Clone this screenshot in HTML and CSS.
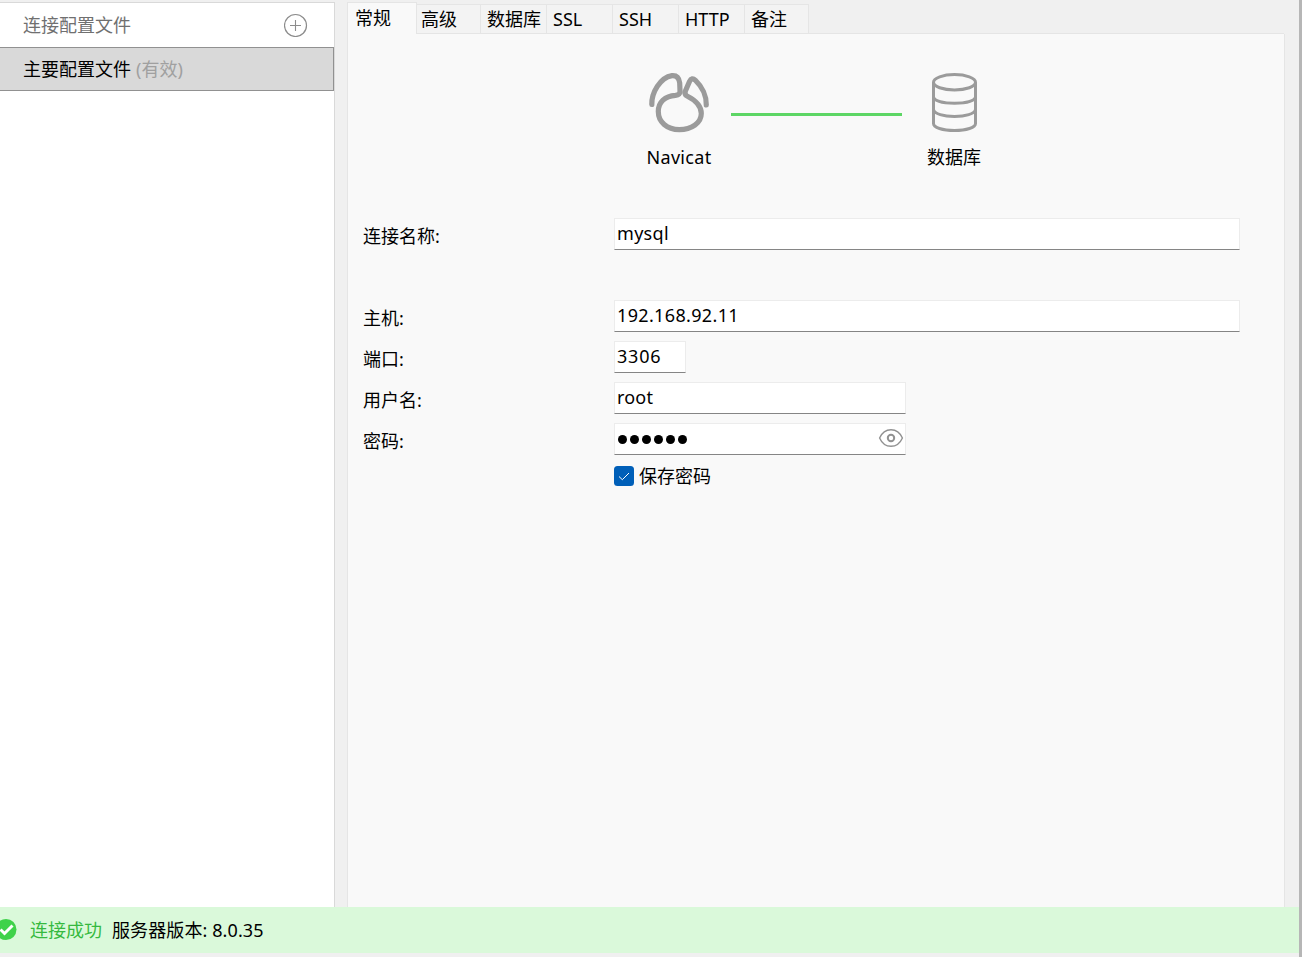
FILE: index.html
```html
<!DOCTYPE html>
<html lang="zh-CN">
<head>
<meta charset="utf-8">
<title>Navicat</title>
<link rel="stylesheet" href="styles.css">
</head>
<body>
<div class="window">
  <div class="main">
    <aside class="sidebar">
      <div class="sidebar-head">
        <span>连接配置文件</span>
        <svg class="add" width="24" height="24" viewBox="0 0 24 24" fill="none" stroke="#8c8c8c"><circle cx="11.500" cy="12.500" r="11" stroke-width="1.200"/><path d="M11.500 7v11M6 12.500h11" stroke-width="1.100"/></svg>
      </div>
      <div class="profile"><span>主要配置文件</span><span class="active-mark">(有效)</span></div>
    </aside>
    <section class="content">
      <nav class="tabs">
        <div class="tab selected">常规</div>
        <div class="tab t-adv">高级</div>
        <div class="tab">数据库</div>
        <div class="tab">SSL</div>
        <div class="tab">SSH</div>
        <div class="tab">HTTP</div>
        <div class="tab t-note">备注</div>
      </nav>
      <div class="panel">
        <div class="diagram">
          <div class="node">
            <svg width="64" height="64" viewBox="0 0 64 64" fill="none" stroke="#9b9b9b" stroke-width="5.200" stroke-linecap="round" stroke-linejoin="round"><path d="M4.800 33.500C4.500 22 13 6.500 25 4.600C30.500 4.200 32.200 7.500 32.700 12L33 20C33 23 31.500 24 28.500 24.300C18 25 11.300 31 11.300 40.500C11.300 51 20 58.600 32.300 58.600C44.500 58.600 54.300 52 54.300 42.500C54.300 34 47 28.500 40 25C38 24 37.600 22.500 38.400 20L42.500 10.500C44 7.300 46 7 48.500 9.300C55 15.500 59.500 25 59.300 34"/></svg>
            <span class="navicat">Navicat</span>
          </div>
          <div class="link"></div>
          <div class="node">
            <svg width="64" height="64" viewBox="0 0 64 64" fill="none" stroke="#9b9b9b" stroke-width="3"><ellipse cx="32.500" cy="11.300" rx="21" ry="7.700"/><path d="M11.500 11.300v41.200c0 4 9 7 21 7s21-3 21-7V11.300M11.500 26c1 4 10 6.300 21 6.300s20-2.300 21-6.300M11.500 38.500c1 4.500 10 7 21 7s20-2.500 21-7"/></svg>
            <span class="db-name">数据库</span>
          </div>
        </div>
        <div class="form">
          <div class="row name-row"><label>连接名称:</label><div class="field wide name">mysql</div></div>
          <div class="row"><label>主机:</label><div class="field wide host">192.168.92.11</div></div>
          <div class="row"><label>端口:</label><div class="field port">3306</div></div>
          <div class="row"><label>用户名:</label><div class="field medium">root</div></div>
          <div class="row"><label>密码:</label><div class="field medium password">
            <span class="dots"><i></i><i></i><i></i><i></i><i></i><i></i></span>
            <svg width="26" height="20" viewBox="0 0 26 20" fill="none" stroke="#919191"><path d="M1.600 10C4 4.500 8 1.700 13 1.700S22 4.500 24.400 10C22 15.500 18 18.300 13 18.300S4 15.500 1.600 10Z" stroke-width="1.400"/><circle cx="13" cy="10" r="3.200" stroke-width="2"/></svg>
          </div></div>
          <div class="save"><svg width="20" height="20" viewBox="0 0 20 20"><rect width="20" height="20" rx="3.500" fill="#005fb8"/><path d="M5 10.500L8.300 13.700L15 7" fill="none" stroke="#fff"/></svg><span>保存密码</span></div>
        </div>
      </div>
    </section>
    <div class="edge"></div>
  </div>
  <footer class="status">
    <svg class="ok" width="22" height="22" viewBox="0 0 22 22"><circle cx="11" cy="10.500" r="10.500" fill="#3fd24a"/><path d="M5.500 10.500l4 4l8-8" fill="none" stroke="#fff" stroke-width="3"/></svg>
    <span class="success">连接成功</span><span class="version">服务器版本: 8.0.35</span>
  </footer>
</div>
</body>
</html>
```
FILE: styles.css
```css
* { box-sizing: border-box; }
body {
  margin: 0;
  font: 18px/24px "Noto Sans", "Noto Sans CJK SC", sans-serif;
  color: #000;
  background: #f0f0f0;
}
svg { display: block; flex: none; }
.window {
  height: 957px;
  border-right: 3px solid #b6b6b6;
  overflow: hidden;
  white-space: nowrap;
}
.main { display: flex; height: 907px; padding-top: 2px; }
.sidebar {
  width: 335px;
  flex: none;
  background: #fff;
  border-top: 1px solid #d9d9d9;
  border-right: 1px solid #d9d9d9;
}
.sidebar-head {
  display: flex;
  justify-content: space-between;
  align-items: center;
  height: 44px;
  padding: 0 26px 0 23px;
  color: #707070;
}
.profile {
  display: flex;
  align-items: center;
  gap: 5px;
  height: 44px;
  padding-left: 23px;
  background: #d9d9d9;
  border: 1px solid #919191;
  border-left: 0;
}
.active-mark { color: #a0a0a0; }
.content { display: flex; flex-direction: column; width: 938px; margin-left: 12px; }
.tabs { display: flex; height: 32px; align-items: flex-end; }
.tab {
  width: 66px;
  height: 30px;
  padding: 2px 0 0 6px;
  background: #f3f3f3;
  border: 1px solid #e5e5e5;
  border-left: 0;
  border-bottom: 0;
}
.selected {
  width: 70px;
  height: 32px;
  padding: 3px 0 0 7px;
  background: #f9f9f9;
  border-left: 1px solid #e5e5e5;
}
.t-adv { width: 64px; padding-left: 4px; }
.t-note { width: 64px; }
.panel {
  flex: 1;
  position: relative;
  padding: 37px 14px 0 15px;
  background: #f9f9f9;
  border-right: 1px solid #e5e5e5;
  border-left: 1px solid #e5e5e5;
}
.panel::before {
  content: "";
  position: absolute;
  top: -1px;
  left: 68px;
  right: 0;
  height: 1px;
  background: #e5e5e5;
}
.diagram { display: flex; padding-left: 284px; height: 147px; }
.node { width: 64px; display: flex; flex-direction: column; align-items: center; gap: 10px; }
.navicat { letter-spacing: 0.3px; }
.link { width: 171px; height: 3px; margin: 42px 20px 0; background: #5dd665; }
.form { display: flex; flex-direction: column; gap: 9px; }
.row { display: flex; height: 32px; }
.row label { width: 251px; padding-top: 6px; }
.name-row { margin-bottom: 41px; }
.field {
  padding: 2px;
  background: #fff;
  border: 1px solid #ececec;
  border-bottom-color: #858585;
}
.wide { width: 626px; }
.name { letter-spacing: 0.3px; }
.host { letter-spacing: 0.35px; }
.port { width: 72px; letter-spacing: 0.8px; }
.medium { width: 292px; letter-spacing: 0.2px; }
.password { display: flex; justify-content: space-between; padding: 4px 1px 0 3px; }
.dots { display: flex; gap: 3px; padding-top: 7px; }
.dots i { width: 9px; height: 9px; border-radius: 50%; background: #000; }
.save { display: flex; align-items: center; gap: 5px; height: 24px; margin: 0 0 0 251px; }
.status {
  display: flex;
  align-items: center;
  height: 46px;
  background: #daf9da;
}
.ok { margin-left: -5px; }
.success { margin-left: 13px; color: #36b93f; }
.version { margin-left: 10px; letter-spacing: 0.1px; }
.edge { width: 14px; }
```
